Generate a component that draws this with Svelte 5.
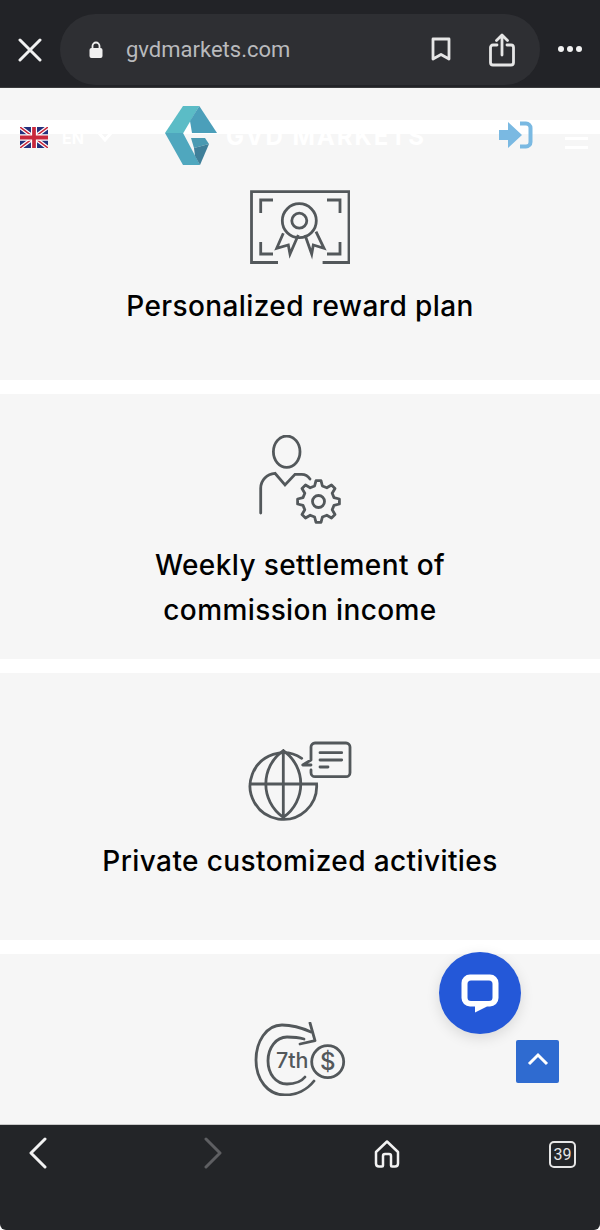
<script>
  const cards = [
    { title: ['Personalized reward plan'], kind: 'first', icon: 'cert' },
    { title: ['Weekly settlement of', 'commission income'], kind: 'two', icon: 'user' },
    { title: ['Private customized activities'], kind: 'one', icon: 'globe' }
  ];

  // 8 tooth gear outline for the settlement icon
  function gearPath(cx, cy, outer, inner, teeth) {
    const step = Math.PI / teeth;
    const pts = [];
    for (let i = 0; i < teeth; i++) {
      const a = (i * 2 * Math.PI) / teeth - Math.PI / 2;
      const parts = [
        [a - step * 0.62, inner],
        [a - step * 0.3, outer],
        [a + step * 0.3, outer],
        [a + step * 0.62, inner]
      ];
      for (const [t, r] of parts) {
        pts.push(`${(cx + Math.cos(t) * r).toFixed(1)} ${(cy + Math.sin(t) * r).toFixed(1)}`);
      }
    }
    return 'M' + pts.join('L') + 'Z';
  }

  const gear = gearPath(60.5, 66.5, 21, 16, 8);
</script>

<div class="phone">
  <header class="topbar">
    <svg class="close" viewBox="0 0 24 24" width="24" height="24">
      <path d="M2 2 22 22M22 2 2 22" />
    </svg>
    <div class="urlbar">
      <svg class="lock" viewBox="0 0 14 18" width="14" height="18">
        <path d="M3.5 8V5a3.5 3.5 0 0 1 7 0v3" fill="none" stroke="#f0f0f0" stroke-width="1.8" />
        <rect x="0.5" y="7" width="13" height="10" rx="2" fill="#f0f0f0" />
      </svg>
      <span class="url">gvdmarkets.com</span>
      <svg class="bookmark" viewBox="0 0 20 24" width="20" height="24">
        <path d="M2 2h16v20L10 17.500 2 22z" />
      </svg>
      <svg class="share" viewBox="0 0 26 34" width="26" height="34">
        <path d="M8 12H4a2.500 2.500 0 0 0-2.500 2.500v15A2.500 2.500 0 0 0 4 32h18a2.500 2.500 0 0 0 2.500-2.500v-15A2.500 2.500 0 0 0 22 12h-4M13 22V2.500M7.500 7.500 13 2l5.500 5.500" />
      </svg>
    </div>
    <div class="dots"><i></i><i></i><i></i></div>
  </header>

  <main class="page">
    <div class="stub"></div>

    {#each cards as card}
      <section class="card {card.kind}">
        {#if card.icon === 'cert'}
          <svg class="icon square" viewBox="0 0 100 74" width="100" height="74">
            <path d="M28 72.500H1.500V1.700H99v70.800H72.600" />
            <path d="M10.700 23V10H23M77 10h13v13M10.700 52v12H23M90 52v12H77" />
            <circle cx="49.300" cy="30.700" r="17" />
            <circle cx="49.300" cy="30.700" r="7.500" />
            <path d="M33.300 43.300 26.700 58.300 38.300 55 40 64 48.300 45M55 45l6.700 19L63.300 55 74 58.300 66 41.700" />
          </svg>
        {:else if card.icon === 'user'}
          <svg class="icon" viewBox="0 0 84 90" width="84" height="90">
            <ellipse cx="28.700" cy="16.700" rx="13.300" ry="15.700" />
            <path d="M2.700 78V53.300C2.700 45 9 39 17 38.300L27 50 37 39.300h6.700C47 39.300 50 41 52 44" />
            <path d={gear} stroke-linejoin="round" />
            <circle cx="60.500" cy="66.500" r="6" />
          </svg>
        {:else}
          <svg class="icon" viewBox="0 0 104 80" width="104" height="80">
            <path d="M53.700 17.300A33.300 33.300 0 1 0 68.600 43H2" />
            <path d="M35.300 9.700V76.300M35.300 9.700C12 26 12 60 35.300 76.300 58.600 60 58.600 26 35.300 9.700" />
            <path d="M63 24H54.700L63 19V6a4 4 0 0 1 4-4h31a4 4 0 0 1 4 4v25.700a4 4 0 0 1-4 4H67a4 4 0 0 1-4-4V29" stroke-linejoin="round" />
            <path d="M72 11.700H93.700M72 19H93.700M72 26H80" />
          </svg>
        {/if}
        <h2>
          {#each card.title as line}
            <span>{line}</span>
          {/each}
        </h2>
      </section>
    {/each}

    <section class="card one">
      <svg class="icon" viewBox="0 0 92 74" width="92" height="74">
        <path d="M57 10C46 5 36 3 28 3 12 3 2 20 2 38c0 20 12 35 29 35 11 0 22-5 29-14" />
        <path d="M56 1l5 17.700L46 22" stroke-linejoin="round" />
        <path d="M50 17C45 15.500 38 15 33 15 22 15 14 26 14 38.700 14 52 22 62 33 62c7 0 14-2 18-7" />
        <circle cx="73.700" cy="39.700" r="16" />
        <text x="22" y="45.500" class="seventh">7th</text>
        <text x="73.700" y="48" class="dollar">$</text>
      </svg>
    </section>
  </main>

  <nav class="bottombar">
    <svg viewBox="0 0 20 32" width="20" height="32" class="back"><path d="M17 2 3 16l14 14" /></svg>
    <svg viewBox="0 0 20 32" width="20" height="32" class="forward"><path d="M3 2l14 14L3 30" /></svg>
    <svg viewBox="0 0 26 28" width="26" height="28" class="home">
      <path d="M2 12 13 1.500 24 12v11.500c0 2-1 3-3 3h-3c-1 0-1-1-1-1V16a2 2 0 0 0-2-2h-4a2 2 0 0 0-2 2v9.500s0 1-1 1H5c-2 0-3-1-3-3z" />
    </svg>
    <div class="tabs">39</div>
  </nav>

  <div class="site-header">
    <svg class="flag" viewBox="0 0 60 42" width="28" height="21" preserveAspectRatio="none">
      <rect width="60" height="42" fill="#23307c" />
      <path d="M0 0 60 42M60 0 0 42" stroke="#fff" stroke-width="8" />
      <path d="M0 0 60 42M60 0 0 42" stroke="#c8283c" stroke-width="3" />
      <path d="M30 0V42M0 21H60" stroke="#fff" stroke-width="13" />
      <path d="M30 0V42M0 21H60" stroke="#c8283c" stroke-width="8" />
    </svg>
    <span class="lang">EN</span>
    <svg class="chev" viewBox="0 0 14 10" width="14" height="10"><path d="M1 1l6 7 6-7" /></svg>
    <svg class="logo" viewBox="0 0 52 60" width="52" height="60">
      <polygon points="18,0 34.300,0 18.300,27 0,27" fill="#5bbcc6" />
      <polygon points="34.300,0 52,27 27,27 25,15" fill="#4b9fba" />
      <polygon points="0,27 18,27 35,59 18,59" fill="#4fa7be" />
      <polygon points="26,32 40,32 44,38 29,42" fill="#4a9ab2" />
      <polygon points="29,42 44,38 35,59 30,50" fill="#3f7f99" />
    </svg>
    <span class="brand">GVD MARKETS</span>
    <svg class="login" viewBox="0 0 34 28" width="34" height="28">
      <path d="M0 9h9V1l14 13L9 27v-8H0z" fill="#7ab9e2" />
      <path d="M21 2.500h6c2.500 0 4.500 2 4.500 4.500v14c0 2.500-2 4.500-4.500 4.500h-6" fill="none" stroke="#7ab9e2" stroke-width="4" />
    </svg>
    <div class="burger"><i></i><i></i></div>
  </div>

  <button class="chat" aria-label="Chat">
    <svg viewBox="0 0 40 40" width="40" height="40">
      <path
        fill="#fff"
        fill-rule="evenodd"
        d="M10 1.500H30a8.500 8.500 0 0 1 8.500 8.500V25a8.500 8.500 0 0 1-8.500 8.500H27L15 39.500v-6H10A8.500 8.500 0 0 1 1.500 25V10A8.500 8.500 0 0 1 10 1.500ZM11 7.500a3.500 3.500 0 0 0-3.500 3.500V24.500A3.500 3.500 0 0 0 11 28H29a3.500 3.500 0 0 0 3.500-3.500V11A3.500 3.500 0 0 0 29 7.500Z"
      />
    </svg>
  </button>

  <button class="to-top" aria-label="Back to top">
    <svg viewBox="0 0 22 14" width="22" height="14"><path d="M2 12l9-9 9 9" /></svg>
  </button>
</div>

<style>
  :global(body) {
    margin: 0;
    background: #fff;
  }

  .phone {
    position: relative;
    width: 600px;
    height: 1230px;
    display: flex;
    flex-direction: column;
    overflow: hidden;
    font-family: Inter, "Liberation Sans", sans-serif;
  }

  .topbar {
    height: 87px;
    flex: none;
    display: flex;
    align-items: flex-start;
    background: #222327;
    border-bottom: 1px solid #3a3b3d;
  }

  .close {
    margin: 38px 0 0 18px;
    fill: none;
    stroke: #f2f2f2;
    stroke-width: 3;
    stroke-linecap: round;
  }

  .urlbar {
    width: 480px;
    height: 71px;
    margin: 14px 0 0 18px;
    border-radius: 36px;
    background: #2e2f33;
    display: flex;
    align-items: flex-start;
  }

  .lock {
    margin: 27px 0 0 29px;
  }

  .url {
    margin: 22px 0 0 23px;
    font-family: Roboto, sans-serif;
    font-size: 22px;
    line-height: 28px;
    color: #b9babd;
  }

  .bookmark {
    margin: 23px 0 0 141px;
    fill: none;
    stroke: #e6e6e6;
    stroke-width: 2.800;
    stroke-linejoin: round;
  }

  .share {
    margin: 19px 0 0 38px;
    fill: none;
    stroke: #e6e6e6;
    stroke-width: 2.800;
    stroke-linecap: round;
    stroke-linejoin: round;
  }

  .dots {
    display: flex;
    gap: 3px;
    margin: 46px 0 0 18px;
  }

  .dots i {
    width: 6px;
    height: 6px;
    border-radius: 50%;
    background: #f2f2f2;
  }

  .page {
    flex: 1;
    min-height: 0;
    overflow: hidden;
    display: flex;
    flex-direction: column;
    gap: 14px;
  }

  .stub {
    height: 32px;
    flex: none;
    background: #f6f6f6;
  }

  .card {
    flex: none;
    height: 267px;
    box-sizing: border-box;
    padding-top: 68px;
    display: flex;
    flex-direction: column;
    align-items: center;
    background: #f6f6f6;
  }

  .card.first {
    height: 246px;
    padding-top: 56px;
  }

  .card.two {
    height: 265px;
    padding-top: 41px;
  }

  .icon {
    display: block;
    flex: none;
    fill: none;
    stroke: #53585b;
    stroke-width: 2.800;
    stroke-linecap: round;
  }

  .icon.square {
    stroke-linecap: butt;
  }

  .seventh {
    font-family: Inter, sans-serif;
    font-size: 21.500px;
    font-weight: 500;
    fill: #53585b;
    stroke: none;
  }

  .dollar {
    font-family: Inter, sans-serif;
    font-size: 24px;
    font-weight: 500;
    fill: #53585b;
    stroke: none;
    text-anchor: middle;
  }

  h2 {
    margin: 20px 0 0;
    font-size: 28px;
    font-weight: 500;
    letter-spacing: 0.4px;
    line-height: 45px;
    color: #000;
    text-align: center;
  }

  .two h2 {
    margin-top: 18px;
  }

  .one h2 {
    margin-top: 18px;
  }

  h2 span {
    display: block;
  }

  .bottombar {
    height: 106px;
    flex: none;
    display: flex;
    align-items: flex-start;
    background: #232528;
    border-top: 1px solid #c9c9c9;
    border-radius: 0 0 6px 6px;
    box-sizing: border-box;
  }

  .bottombar svg {
    fill: none;
    stroke-linecap: round;
    stroke-linejoin: round;
  }

  .back {
    margin: 12px 0 0 28px;
    stroke: #f2f2f2;
    stroke-width: 3;
  }

  .forward {
    margin: 12px 0 0 155px;
    stroke: #5e5f62;
    stroke-width: 3;
  }

  .home {
    margin: 15px 0 0 151px;
    stroke: #f2f2f2;
    stroke-width: 2.500;
  }

  .tabs {
    margin: 16px 0 0 149px;
    width: 27px;
    height: 27px;
    box-sizing: border-box;
    border: 2px solid #e6e6e6;
    border-radius: 5px;
    color: #e6e6e6;
    font-family: Roboto, sans-serif;
    font-size: 16px;
    line-height: 23px;
    text-align: center;
  }

  .site-header {
    position: absolute;
    top: 106px;
    left: 0;
    width: 600px;
    height: 60px;
  }

  .flag,
  .lang,
  .chev,
  .logo,
  .brand,
  .login,
  .burger {
    position: absolute;
  }

  .flag {
    left: 20px;
    top: 21px;
  }

  .lang {
    left: 62px;
    top: 22px;
    font-size: 16px;
    line-height: 20px;
    font-weight: 700;
    color: #fff;
  }

  .chev {
    left: 98px;
    top: 26px;
    fill: none;
    stroke: #fff;
    stroke-width: 3;
  }

  .logo {
    left: 165px;
    top: 0;
  }

  .brand {
    left: 226px;
    top: 16px;
    font-size: 24px;
    line-height: 30px;
    font-weight: 700;
    letter-spacing: 2px;
    white-space: nowrap;
    color: #fff;
  }

  .login {
    left: 499px;
    top: 15px;
  }

  .burger {
    left: 565px;
    top: 31px;
    width: 23px;
    display: flex;
    flex-direction: column;
    gap: 6px;
  }

  .burger i {
    height: 3px;
    background: #fff;
  }

  .chat {
    position: absolute;
    left: 439px;
    top: 952px;
    width: 82px;
    height: 82px;
    padding: 0;
    border: none;
    border-radius: 50%;
    background: #2458d8;
    box-shadow: 0 4px 14px rgba(0, 0, 0, 0.12);
    display: flex;
    align-items: center;
    justify-content: center;
  }

  .to-top {
    position: absolute;
    left: 516px;
    top: 1040px;
    width: 43px;
    height: 43px;
    padding: 0 0 6px;
    border: none;
    border-radius: 2px;
    background: #2f6bd0;
    display: flex;
    align-items: center;
    justify-content: center;
  }

  .to-top svg {
    fill: none;
    stroke: #fff;
    stroke-width: 3;
  }
</style>
